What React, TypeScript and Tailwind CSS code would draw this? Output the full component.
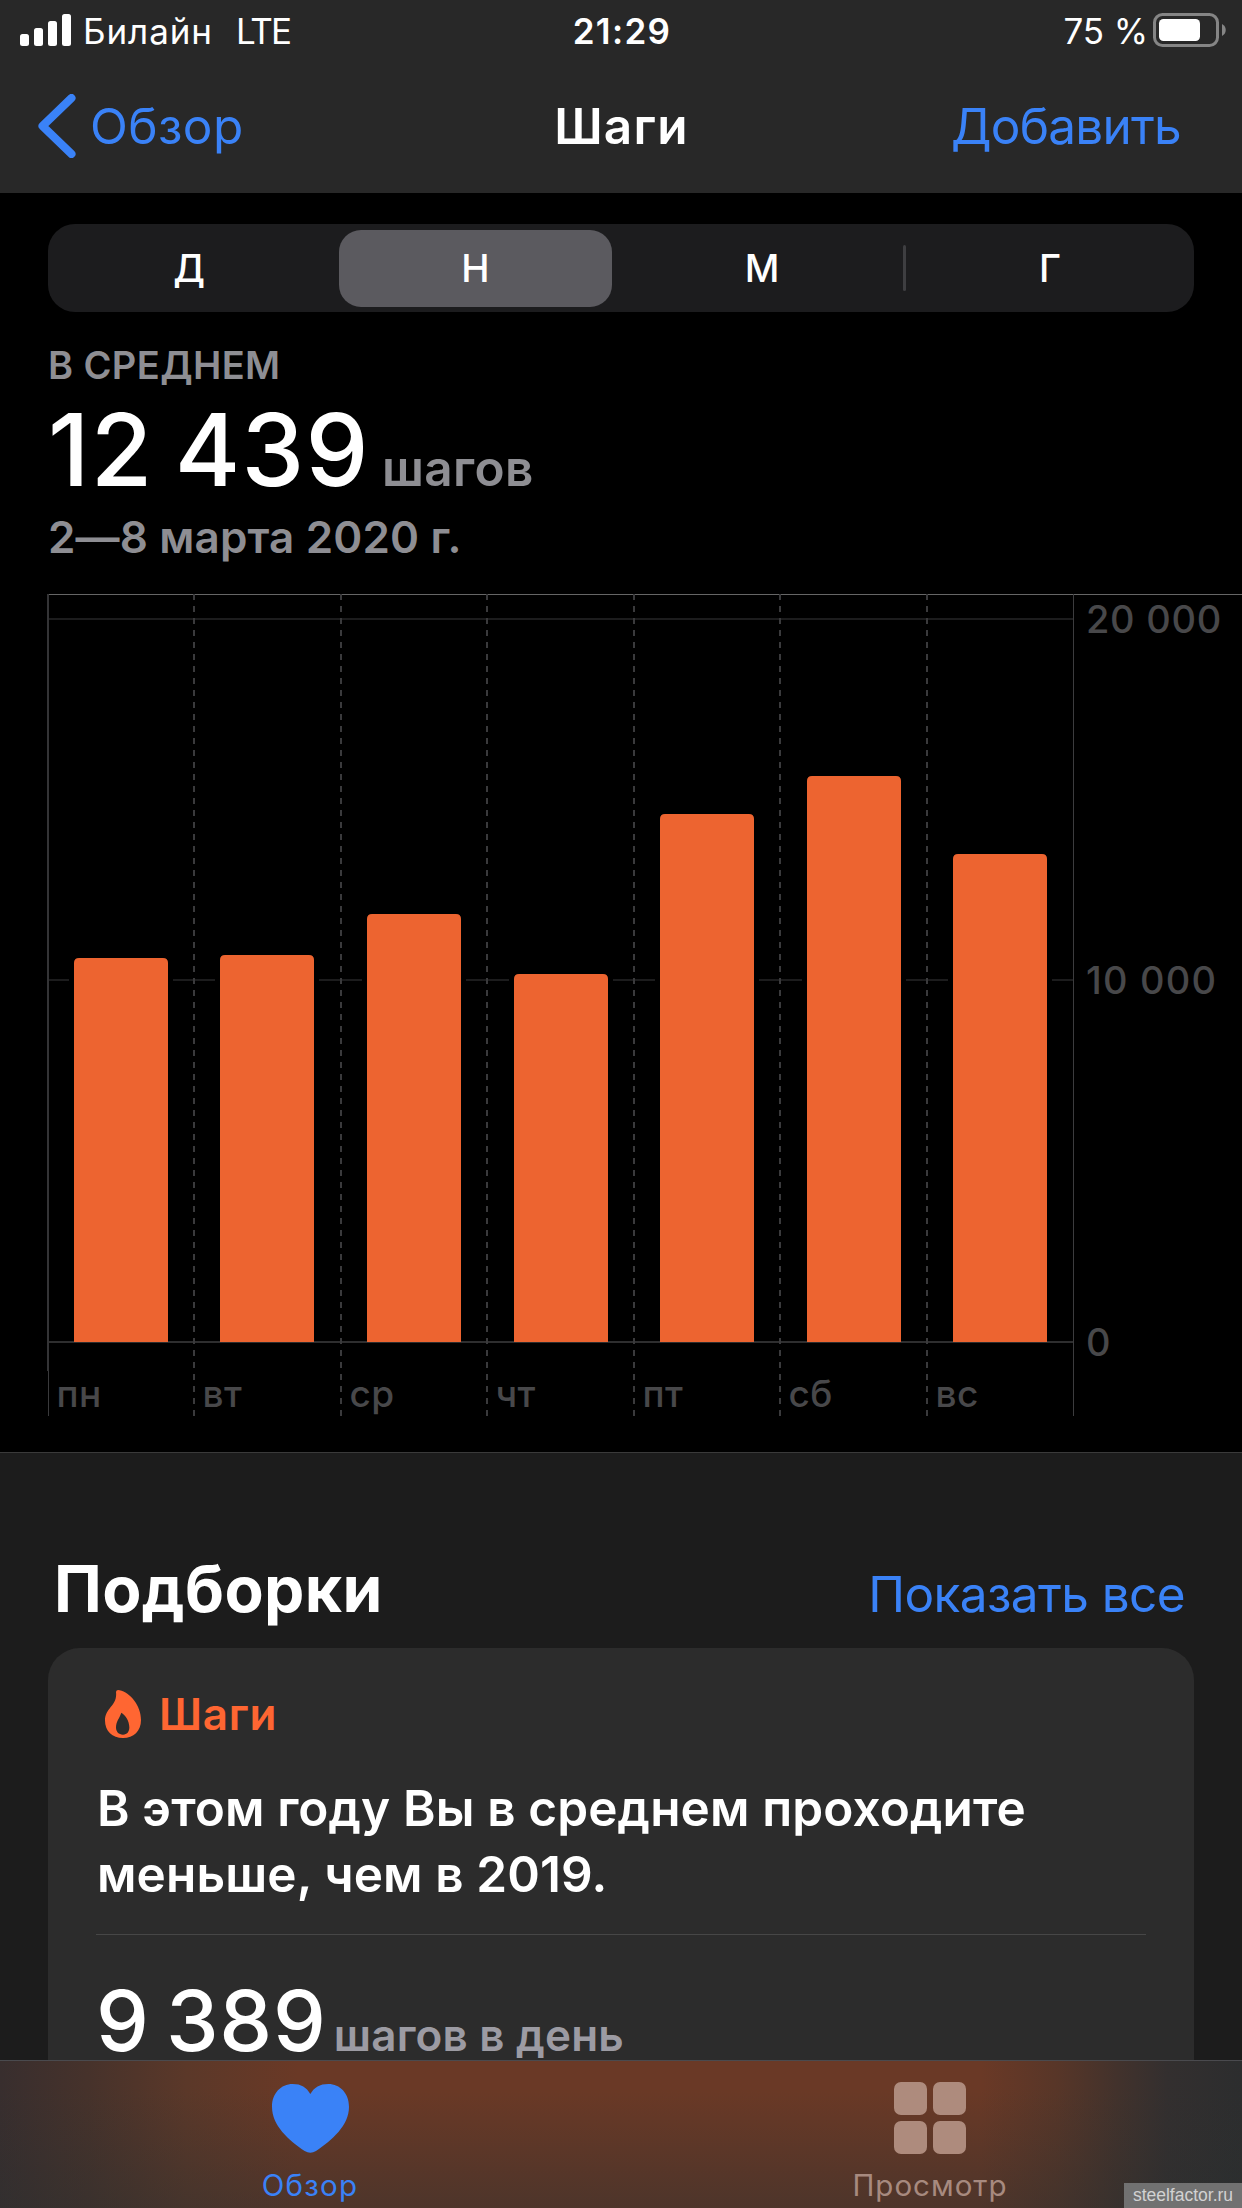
import clsx from 'clsx'

const periods = [
    { label: 'Д', width: 'w-[282px]' },
    { label: 'Н', width: 'w-[291px]', active: true },
    { label: 'М', width: 'w-[282px]' },
    { label: 'Г', width: 'w-[291px]', divider: true },
]

// x: left edge of the day column, top: top edge of the bar
const days = [
    { label: 'пн', x: 48, bar: 74, top: 364 },
    { label: 'вт', x: 194, bar: 220, top: 361 },
    { label: 'ср', x: 341, bar: 367, top: 320 },
    { label: 'чт', x: 487, bar: 514, top: 380 },
    { label: 'пт', x: 634, bar: 660, top: 220 },
    { label: 'сб', x: 780, bar: 807, top: 182 },
    { label: 'вс', x: 927, bar: 953, top: 260 },
]

const BASE = 748
const BAR_WIDTH = 94

function SignalIcon() {
    return (
        <svg width="52" height="34" viewBox="0 0 52 34" fill="#fff" aria-hidden="true">
            <rect x="0" y="20" width="9" height="12" rx="2.5" />
            <rect x="14" y="14" width="9" height="18" rx="2.5" />
            <rect x="28" y="7" width="9" height="25" rx="2.5" />
            <rect x="42" y="0" width="9" height="32" rx="2.5" />
        </svg>
    )
}

function BatteryIcon() {
    return (
        <svg width="73" height="38" viewBox="0 0 73 38" aria-hidden="true">
            <rect x="1.5" y="2.5" width="63" height="31" rx="8" fill="none" stroke="#858585" strokeWidth="3" />
            <rect x="6" y="7" width="41" height="22" rx="4.5" fill="#fff" />
            <path d="M69 12 C74 14.500 74 21.500 69 24 Z" fill="#858585" />
        </svg>
    )
}

function StatusBar() {
    return (
        <div className="grid h-[62px] grid-cols-3 items-center pl-5 pr-4 text-[35px] text-white">
            <div className="flex items-center">
                <SignalIcon />
                <span className="ml-[11px] tracking-[0.9px]">Билайн</span>
                <span className="ml-[23px] tracking-[-2px]">LTE</span>
            </div>
            <div className="mr-[2px] text-center font-semibold tracking-[1.3px]">21:29</div>
            <div className="flex items-center justify-end gap-[5px]">
                <span className="tracking-[-0.1px]">75 %</span>
                <BatteryIcon />
            </div>
        </div>
    )
}

function NavBar() {
    return (
        <div className="grid h-[131px] grid-cols-3 items-center pb-[3px] pl-[38px] pr-[61px] text-[49.5px]">
            <div className="flex items-center text-[#3a82f7]">
                <svg width="38" height="64" viewBox="0 0 38 64" fill="none" aria-hidden="true">
                    <path d="M33.500 4 L4.500 32 L33.500 60" stroke="currentColor" strokeWidth="8" strokeLinecap="round" strokeLinejoin="round" />
                </svg>
                <span className="ml-[14px] tracking-[0.4px]">Обзор</span>
            </div>
            <div className="ml-6 text-center font-semibold tracking-[1.2px] text-white">Шаги</div>
            <div className="text-right tracking-[-0.77px] text-[#3a82f7]">Добавить</div>
        </div>
    )
}

function PeriodControl() {
    return (
        <div className="mx-12 mt-[31px] flex h-[88px] rounded-[27px] bg-[#1c1c1e] text-[38px] font-medium text-white">
            {periods.map(p => (
                <div key={p.label} className={clsx('flex items-center', p.width)}>
                    {p.divider && <div className="h-[46px] w-[3px] rounded-full bg-[#3e3e41]" />}
                    <div
                        className={clsx(
                            'flex flex-1 items-center justify-center',
                            p.active && 'mx-[9px] h-[77px] rounded-[22px] bg-[#5b5a5f]',
                        )}
                    >
                        {p.label}
                    </div>
                </div>
            ))}
        </div>
    )
}

function Summary() {
    return (
        <div className="mt-[31px] pl-[48px] font-semibold text-[#8e8e93]">
            <div className="text-[38px] leading-[44px] tracking-[0.4px]">В СРЕДНЕМ</div>
            <div className="mt-[13px] flex h-[100px] items-baseline">
                <span className="text-[100px] leading-[100px] font-medium tracking-[1.3px] text-white [word-spacing:-7px]">12 439</span>
                <span className="ml-[12px] text-[49.5px] leading-none tracking-[0.36px]">шагов</span>
            </div>
            <div className="mt-[11px] text-[44px] leading-[52px] tracking-[0.15px]">2—8 марта 2020 г.</div>
        </div>
    )
}

function StepsChart() {
    return (
        <svg className="mt-[31px] block font-medium" width="1242" height="822" viewBox="0 0 1242 822">
            <g fill="#1c1c1d">
                <rect x="49" y="24" width="1024" height="2" />
                <rect x="49" y="385" width="1024" height="2" />
            </g>
            <rect x="49" y={BASE - 1} width="1024" height="2" fill="#2e2e2f" />

            {/* Week frame */}
            <rect x="48" y="0" width="1194" height="1" fill="#666666" />
            <rect x="47" y="0" width="2" height="777" fill="#343436" />
            <rect x="48" y="777" width="1" height="45" fill="#3a3a3c" />
            <rect x="1073" y="0" width="1" height="822" fill="#3c3c3e" />
            {days.slice(1).map(d => (
                <line key={d.label} x1={d.x} x2={d.x} y1="0" y2="822" stroke="#3a3a3c" strokeWidth="2" strokeDasharray="6 6" />
            ))}

            {days.map(d => (
                <g key={d.label}>
                    <rect x={d.bar - 5} y={d.top - 5} width={BAR_WIDTH + 10} height={BASE - d.top + 4} fill="#000" />
                    <path
                        d={`M${d.bar} ${BASE} V${d.top + 5} q0 -5 5 -5 h${BAR_WIDTH - 10} q5 0 5 5 V${BASE} Z`}
                        fill="#ed6430"
                    />
                    <text x={d.x + 8.5} y="813" fontSize="37" letterSpacing="0.4" fill="#48484a">{d.label}</text>
                </g>
            ))}

            <g fontSize="38" fill="#48484a">
                <text x="1086" y="39" letterSpacing="0.7">20 000</text>
                <text x="1086" y="400" letterSpacing="1.2">10 000</text>
                <text x="1086" y="762">0</text>
            </g>
        </svg>
    )
}

function FlameIcon() {
    return (
        <svg width="36" height="48" viewBox="0 0 108 144" fill="#ff6632" aria-hidden="true">
            <path
                fillRule="evenodd"
                d="M33 6 Q34 -2 44 1 C75 8 108 46 108 90 C108 123 86 144 54 144 C22 144 0 122 0 92 C0 52 38 48 33 6 Z M49 68 C43 85 33 95 33 112 C33 126 41 134 54 134 C66 134 73 126 73 112 C73 92 60 74 49 68 Z"
            />
        </svg>
    )
}

function Highlights() {
    return (
        <section className="mt-9 h-[608px] border-t border-[#3a3a3a] bg-[#1c1c1c]">
            <div className="flex items-baseline justify-between pl-[54px] pr-[57px] pt-[98px]">
                <h2 className="text-[64px] leading-[76px] font-bold tracking-[0.4px] text-white">Подборки</h2>
                <span className="text-[49.5px] leading-[60px] tracking-[-0.59px] text-[#3a82f7]">Показать все</span>
            </div>
            <div className="mx-12 mt-[21px] h-[412px] rounded-t-[32px] bg-[#2c2c2c] px-12 pt-10">
                <div className="ml-[9px] flex items-center gap-[18px]">
                    <FlameIcon />
                    <span className="text-[44px] leading-[52px] font-semibold tracking-[0.7px] text-[#ff6632]">Шаги</span>
                </div>
                <p className="mt-[35px] ml-px text-[49.5px] leading-[66px] font-semibold tracking-[0.12px] text-white">
                    В этом году Вы в среднем проходите
                    <br />
                    меньше, чем в 2019.
                </p>
                <div className="mt-[27px] h-px bg-[#474747]" />
                <div className="mt-12 flex items-baseline">
                    <span className="text-[84px] leading-[76px] font-medium tracking-[0.8px] text-white [word-spacing:-7px]">9 389</span>
                    <span className="ml-[7px] text-[44px] leading-none font-semibold tracking-[0.2px] text-[#9c9ba3]">шагов в день</span>
                </div>
            </div>
        </section>
    )
}

function TabBar() {
    return (
        <nav className="h-[148px] border-t border-[#4a4a4e] bg-[linear-gradient(to_bottom,rgba(43,48,48,0)_20%,rgba(43,48,48,0.45)_100%),linear-gradient(to_right,#382e2e_0%,#46322b_7%,#5b3829_15%,#6a3926_24%,#6a3926_79%,#583628_85%,#42322c_90%,#332f2f_94%,#2c2d2e_100%)]">
            <div className="grid grid-cols-2 pt-[21px] pr-[2px] text-[29.5px] leading-9">
                <div className="flex flex-col items-center text-[#3a82f7]">
                    <div className="flex h-[72px] items-center">
                        <svg width="77" height="69" viewBox="0 0 231 207" fill="currentColor" aria-hidden="true">
                            <path d="M115 30 C103 10 88 0 62 0 C27 0 0 28 0 68 C0 125 50 168 98 201 Q115 212 132 201 C180 168 231 125 231 68 C231 28 204 0 169 0 C143 0 127 10 115 30 Z" />
                        </svg>
                    </div>
                    <span className="mt-[13px] tracking-[1.2px]">Обзор</span>
                </div>
                <div className="flex flex-col items-center text-[#a78a7f]">
                    <div className="grid h-[72px] grid-cols-2 gap-[6px]">
                        {[0, 1, 2, 3].map(i => (
                            <div key={i} className="size-[33px] rounded-[7px] bg-[#ae8b7d]" />
                        ))}
                    </div>
                    <span className="mt-[13px] tracking-[1px]">Просмотр</span>
                </div>
            </div>
        </nav>
    )
}

export default function App() {
    return (
        <div className="relative h-[2208px] w-[1242px] overflow-hidden bg-black font-['Inter',sans-serif]">
            <header className="bg-[#282828]">
                <StatusBar />
                <NavBar />
            </header>
            <PeriodControl />
            <Summary />
            <StepsChart />
            <Highlights />
            <TabBar />
            <div className="absolute right-0 bottom-0 flex h-[25px] w-[118px] items-center justify-center bg-[#717171] font-['Liberation_Sans',sans-serif] text-[17.5px] text-[#d2d2d2]">
                steelfactor.ru
            </div>
        </div>
    )
}
